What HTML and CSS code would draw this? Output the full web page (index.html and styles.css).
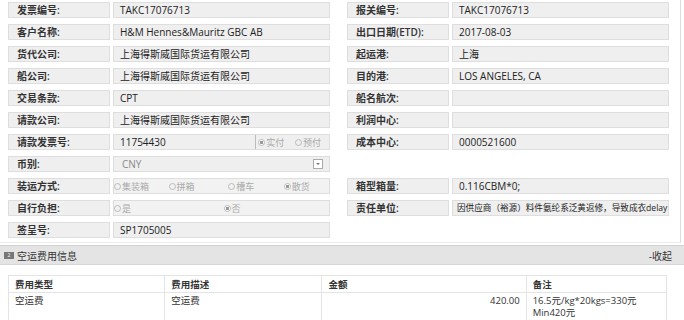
FILE: index.html
```html
<!DOCTYPE html>
<html lang="zh-CN">
<head>
  <meta charset="UTF-8" />
  <title>空运费用</title>
  <link rel="stylesheet" href="styles.css">
</head>
<body>
  <div class="form-panel">
    <div class="row">
      <div class="field"><div class="label">发票编号:</div><div class="value">TAKC17076713</div></div>
      <div class="field"><div class="label">报关编号:</div><div class="value">TAKC17076713</div></div>
    </div>
    <div class="row">
      <div class="field"><div class="label">客户名称:</div><div class="value">H&amp;M Hennes&amp;Mauritz GBC AB</div></div>
      <div class="field"><div class="label">出口日期(ETD):</div><div class="value">2017-08-03</div></div>
    </div>
    <div class="row">
      <div class="field"><div class="label">货代公司:</div><div class="value">上海得斯威国际货运有限公司</div></div>
      <div class="field"><div class="label">起运港:</div><div class="value">上海</div></div>
    </div>
    <div class="row">
      <div class="field"><div class="label">船公司:</div><div class="value">上海得斯威国际货运有限公司</div></div>
      <div class="field"><div class="label">目的港:</div><div class="value">LOS ANGELES, CA</div></div>
    </div>
    <div class="row">
      <div class="field"><div class="label">交易条款:</div><div class="value">CPT</div></div>
      <div class="field"><div class="label">船名航次:</div><div class="value"></div></div>
    </div>
    <div class="row">
      <div class="field"><div class="label">请款公司:</div><div class="value">上海得斯威国际货运有限公司</div></div>
      <div class="field"><div class="label">利润中心:</div><div class="value"></div></div>
    </div>
    <div class="row">
      <div class="field">
        <div class="label">请款发票号:</div>
        <div class="value split">
          <span class="split-main">11754430</span>
          <span class="radios">
            <span class="radio on"><i></i>实付</span>
            <span class="radio"><i></i>预付</span>
          </span>
        </div>
      </div>
      <div class="field"><div class="label">成本中心:</div><div class="value">0000521600</div></div>
    </div>
    <div class="row">
      <div class="field">
        <div class="label">币别:</div>
        <div class="value select"><span class="muted-text">CNY</span><span class="arrow"></span></div>
      </div>
    </div>
    <div class="row">
      <div class="field">
        <div class="label">装运方式:</div>
        <div class="value options">
          <span class="radio w52"><i></i>集装箱</span>
          <span class="radio w57"><i></i>拼箱</span>
          <span class="radio w53"><i></i>槽车</span>
          <span class="radio on"><i></i>散货</span>
        </div>
      </div>
      <div class="field"><div class="label">箱型箱量:</div><div class="value">0.116CBM*0;</div></div>
    </div>
    <div class="row">
      <div class="field">
        <div class="label">自行负担:</div>
        <div class="value options">
          <span class="radio w107"><i></i>是</span>
          <span class="radio on"><i></i>否</span>
        </div>
      </div>
      <div class="field"><div class="label">责任单位:</div><div class="value clip">因供应商（裕源）料件氨纶系泛黄返修，导致成衣delay</div></div>
    </div>
    <div class="row">
      <div class="field"><div class="label">签呈号:</div><div class="value">SP1705005</div></div>
    </div>
  </div>

  <div class="section-head">
    <span class="section-num">2</span>
    <span class="section-title">空运费用信息</span>
    <span class="section-toggle">-收起</span>
  </div>

  <table class="fee-table">
    <thead>
      <tr>
        <th class="c1">费用类型</th>
        <th class="c2">费用描述</th>
        <th class="c3">金额</th>
        <th class="c4">备注</th>
      </tr>
    </thead>
    <tbody>
      <tr>
        <td>空运费</td>
        <td>空运费</td>
        <td class="num">420.00</td>
        <td>16.5元/kg*20kgs=330元<br>Min420元</td>
      </tr>
    </tbody>
  </table>
</body>
</html>
```

FILE: styles.css
```css
body {
  margin: 0;
  font-family: "Open Sans", "Noto Sans CJK SC", sans-serif;
  font-size: 10px;
  color: #333;
  background: #fff;
  overflow: hidden;
}
.form-panel {
  width: 681px;
  padding: 2px 0 0 8px;
  box-sizing: border-box;
  height: 243px;
  border-right: 1px solid #dcdcdc;
  border-bottom: 1px solid #ececec;
}
.row {
  display: flex;
  gap: 17px;
  height: 16px;
  margin-bottom: 6px;
}
.field {
  display: flex;
  gap: 3px;
}
.label, .value {
  height: 16px;
  line-height: 15px;
  box-sizing: border-box;
  background: #efefef;
  border: 1px solid #dedede;
  white-space: nowrap;
  overflow: hidden;
}
.label {
  width: 102px;
  padding-left: 8px;
  color: #333;
  font-weight: 600;
}
.value {
  width: 217px;
  padding-left: 6px;
  color: #222;
}
.split {
  display: flex;
}
.split-main {
  width: 152px;
  border-right: 1px solid #bbb;
}
.radios {
  padding-left: 2px;
}
.radio {
  display: inline-block;
  color: #aaa;
  font-size: 9px;
  margin-right: 8px;
}
.radio i {
  display: inline-block;
  width: 5px;
  height: 5px;
  border: 1px solid #bbb;
  border-radius: 50%;
  margin-right: 1px;
  vertical-align: 0;
  box-sizing: content-box;
}
.radio.on i {
  background: radial-gradient(circle, #999 40%, #fff 45%);
}
.options {
  padding-left: 0;
  background: #f2f2f2;
}
.options .radio {
  margin-right: 0;
}
.w52 { width: 52px; }
.w57 { width: 57px; }
.w53 { width: 53px; }
.w107 { width: 107px; }
.select {
  display: flex;
  justify-content: space-between;
  align-items: center;
  padding-left: 8px;
  padding-right: 6px;
}
.muted-text {
  color: #888;
}
.arrow {
  width: 8px;
  height: 8px;
  border: 1px solid #aaa;
  background: #fff;
  position: relative;
}
.arrow::after {
  content: "";
  position: absolute;
  left: 2px;
  top: 3px;
  border-left: 2px solid transparent;
  border-right: 2px solid transparent;
  border-top: 2px solid #777;
}
.clip {
  font-size: 8.6px;
  padding-left: 4px;
}
.section-head {
  margin-top: 2px;
  display: flex;
  align-items: center;
  height: 18px;
  background: #e4e4e4;
  border-top: 1px solid #d2d2d2;
  border-bottom: 1px solid #d6d6d6;
  padding: 0 12px 0 4px;
}
.section-num {
  width: 10px;
  height: 7px;
  background: #777;
  color: #fff;
  font-size: 5px;
  line-height: 7px;
  text-align: center;
  margin-right: 3px;
}
.section-title {
  flex: 1;
}
.fee-table {
  margin: 10px 0 0 8px;
  width: 659px;
  border-collapse: collapse;
}
.fee-table th, .fee-table td {
  border: 1px solid #e4e4e4;
  text-align: left;
  vertical-align: top;
  padding: 3px 6px 2px;
  line-height: 11px;
  font-size: 9.5px;
}
.fee-table td {
  line-height: 12px;
  padding-top: 2px;
}
.fee-table th {
  font-weight: 600;
  color: #333;
}
.fee-table td.num {
  text-align: right;
}
.c1 { width: 158px; }
.c2 { width: 159px; }
.c3 { width: 209px; }
.c4 { width: 133px; }
```
